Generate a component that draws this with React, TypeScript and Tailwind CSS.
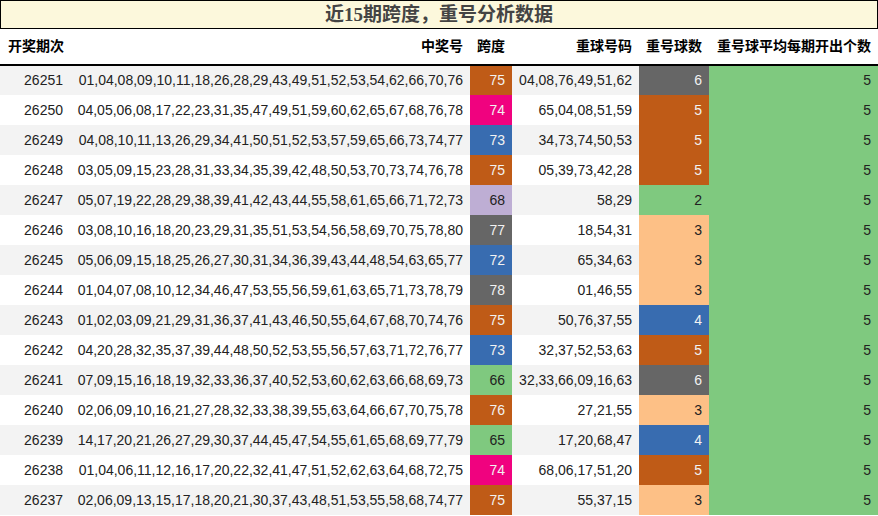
const rows: [string, string, number, string, number][] = [
  ["26251", "01,04,08,09,10,11,18,26,28,29,43,49,51,52,53,54,62,66,70,76", 75, "04,08,76,49,51,62", 6],
  ["26250", "04,05,06,08,17,22,23,31,35,47,49,51,59,60,62,65,67,68,76,78", 74, "65,04,08,51,59", 5],
  ["26249", "04,08,10,11,13,26,29,34,41,50,51,52,53,57,59,65,66,73,74,77", 73, "34,73,74,50,53", 5],
  ["26248", "03,05,09,15,23,28,31,33,34,35,39,42,48,50,53,70,73,74,76,78", 75, "05,39,73,42,28", 5],
  ["26247", "05,07,19,22,28,29,38,39,41,42,43,44,55,58,61,65,66,71,72,73", 68, "58,29", 2],
  ["26246", "03,08,10,16,18,20,23,29,31,35,51,53,54,56,58,69,70,75,78,80", 77, "18,54,31", 3],
  ["26245", "05,06,09,15,18,25,26,27,30,31,34,36,39,43,44,48,54,63,65,77", 72, "65,34,63", 3],
  ["26244", "01,04,07,08,10,12,34,46,47,53,55,56,59,61,63,65,71,73,78,79", 78, "01,46,55", 3],
  ["26243", "01,02,03,09,21,29,31,36,37,41,43,46,50,55,64,67,68,70,74,76", 75, "50,76,37,55", 4],
  ["26242", "04,20,28,32,35,37,39,44,48,50,52,53,55,56,57,63,71,72,76,77", 73, "32,37,52,53,63", 5],
  ["26241", "07,09,15,16,18,19,32,33,36,37,40,52,53,60,62,63,66,68,69,73", 66, "32,33,66,09,16,63", 6],
  ["26240", "02,06,09,10,16,21,27,28,32,33,38,39,55,63,64,66,67,70,75,78", 76, "27,21,55", 3],
  ["26239", "14,17,20,21,26,27,29,30,37,44,45,47,54,55,61,65,68,69,77,79", 65, "17,20,68,47", 4],
  ["26238", "01,04,06,11,12,16,17,20,22,32,41,47,51,52,62,63,64,68,72,75", 74, "68,06,17,51,20", 5],
  ["26237", "02,06,09,13,15,17,18,20,21,30,37,43,48,51,53,55,58,68,74,77", 75, "55,37,15", 3],
];

// Accent palette
const spanColor: Record<number, string> = {
  75: "bg-[#bf5b17] text-[#f2f2f2]",
  76: "bg-[#bf5b17] text-[#f2f2f2]",
  74: "bg-[#f0027f] text-[#f2f2f2]",
  73: "bg-[#386cb0] text-[#f2f2f2]",
  72: "bg-[#386cb0] text-[#f2f2f2]",
  77: "bg-[#666666] text-[#f2f2f2]",
  78: "bg-[#666666] text-[#f2f2f2]",
  68: "bg-[#beaed4] text-[#222]",
  66: "bg-[#7fc97f] text-[#222]",
  65: "bg-[#7fc97f] text-[#222]",
};

const countColor: Record<number, string> = {
  6: "bg-[#666666] text-[#f2f2f2]",
  5: "bg-[#bf5b17] text-[#f2f2f2]",
  4: "bg-[#386cb0] text-[#f2f2f2]",
  3: "bg-[#fdc086] text-[#222]",
  2: "bg-[#7fc97f] text-[#222]",
};

export default function App() {
  return (
    <div
      className="w-[878px] h-[516px] overflow-hidden bg-white text-[#222]"
      style={{ fontFamily: '"Liberation Sans", "Noto Sans CJK SC", sans-serif' }}
    >
      <div
        className="h-[29px] border border-black bg-[#fcf8dc] flex items-center justify-center text-[19px] font-bold text-[#444] leading-none"
        style={{ fontFamily: '"Liberation Serif", "Noto Sans CJK SC", serif' }}
      >
        近15期跨度，重号分析数据
      </div>
      <table className="w-full table-fixed border-collapse text-[14px]">
        <colgroup>
          <col className="w-[72px]" />
          <col className="w-[398px]" />
          <col className="w-[42px]" />
          <col className="w-[127px]" />
          <col className="w-[70px]" />
          <col />
        </colgroup>
        <thead>
          <tr className="h-[36px] border-b-2 border-black font-bold text-black">
            <th className="text-left pl-[8px] font-bold whitespace-nowrap">开奖期次</th>
            <th className="text-right pr-[7px] font-bold">中奖号</th>
            <th className="text-right pr-[7px] font-bold whitespace-nowrap">跨度</th>
            <th className="text-right pr-[7px] font-bold">重球号码</th>
            <th className="text-right pr-[7px] font-bold whitespace-nowrap">重号球数</th>
            <th className="text-right pr-[7px] font-bold whitespace-nowrap">重号球平均每期开出个数</th>
          </tr>
        </thead>
        <tbody>
          {rows.map(([issue, nums, span, rep, cnt], i) => (
            <tr key={issue} className={`h-[30px] ${i % 2 === 0 ? "bg-[#f3f3f3]" : "bg-white"}`}>
              <td className="text-right pr-[9px]">{issue}</td>
              <td className="text-right pr-[7px] whitespace-nowrap">{nums}</td>
              <td className={`text-right pr-[7px] ${spanColor[span]}`}>{span}</td>
              <td className="text-right pr-[7px] whitespace-nowrap">{rep}</td>
              <td className={`text-right pr-[7px] ${countColor[cnt]}`}>{cnt}</td>
              <td className="text-right pr-[7px] bg-[#7fc97f] text-[#222]">5</td>
            </tr>
          ))}
        </tbody>
      </table>
    </div>
  );
}
